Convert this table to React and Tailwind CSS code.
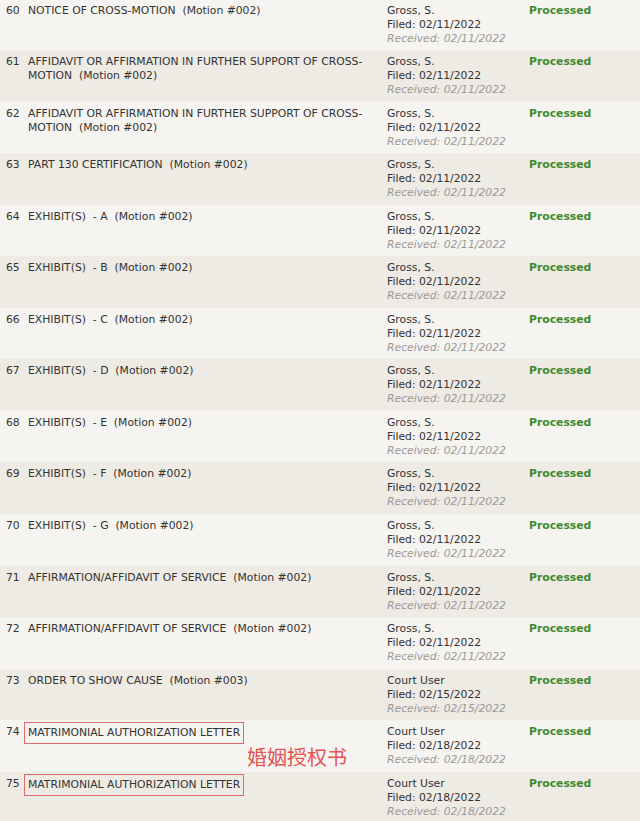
const rows = [
  { n: 60, doc: 'NOTICE OF CROSS-MOTION', motion: '002', by: 'Gross, S.', date: '02/11/2022' },
  { n: 61, doc: 'AFFIDAVIT OR AFFIRMATION IN FURTHER SUPPORT OF CROSS-MOTION', motion: '002', by: 'Gross, S.', date: '02/11/2022' },
  { n: 62, doc: 'AFFIDAVIT OR AFFIRMATION IN FURTHER SUPPORT OF CROSS-MOTION', motion: '002', by: 'Gross, S.', date: '02/11/2022' },
  { n: 63, doc: 'PART 130 CERTIFICATION', motion: '002', by: 'Gross, S.', date: '02/11/2022' },
  { n: 64, doc: 'EXHIBIT(S)\u00a0 - A', motion: '002', by: 'Gross, S.', date: '02/11/2022' },
  { n: 65, doc: 'EXHIBIT(S)\u00a0 - B', motion: '002', by: 'Gross, S.', date: '02/11/2022' },
  { n: 66, doc: 'EXHIBIT(S)\u00a0 - C', motion: '002', by: 'Gross, S.', date: '02/11/2022' },
  { n: 67, doc: 'EXHIBIT(S)\u00a0 - D', motion: '002', by: 'Gross, S.', date: '02/11/2022' },
  { n: 68, doc: 'EXHIBIT(S)\u00a0 - E', motion: '002', by: 'Gross, S.', date: '02/11/2022' },
  { n: 69, doc: 'EXHIBIT(S)\u00a0 - F', motion: '002', by: 'Gross, S.', date: '02/11/2022' },
  { n: 70, doc: 'EXHIBIT(S)\u00a0 - G', motion: '002', by: 'Gross, S.', date: '02/11/2022' },
  { n: 71, doc: 'AFFIRMATION/AFFIDAVIT OF SERVICE', motion: '002', by: 'Gross, S.', date: '02/11/2022' },
  { n: 72, doc: 'AFFIRMATION/AFFIDAVIT OF SERVICE', motion: '002', by: 'Gross, S.', date: '02/11/2022' },
  { n: 73, doc: 'ORDER TO SHOW CAUSE', motion: '003', by: 'Court User', date: '02/15/2022' },
  { n: 74, doc: 'MATRIMONIAL AUTHORIZATION LETTER', boxed: true, note: '婚姻授权书', by: 'Court User', date: '02/18/2022' },
  { n: 75, doc: 'MATRIMONIAL AUTHORIZATION LETTER', boxed: true, by: 'Court User', date: '02/18/2022' },
];

const App = () => {
  return (
    <div
      className="w-[640px] h-[821px] overflow-hidden bg-[#f6f4f0] text-[10.8px] leading-[14px] text-[#333]"
      style={{ fontFamily: '"DejaVu Sans", Verdana, sans-serif' }}
    >
      <div className="-mt-[1.5px]">
        {rows.map((r, i) => (
          <div
            key={r.n}
            className={`flex h-[51.55px] pt-[5px] ${i % 2 === 0 ? 'bg-[#f6f4f0]' : 'bg-[#eeeae4]'}`}
          >
            <div className="w-[28px] shrink-0 pl-[6px]">{r.n}</div>
            <div className="w-[359px] shrink-0 pr-[10px] relative">
              {r.boxed ? (
                <span className="inline-block -ml-[4px] -mt-[3px] border border-[#e06a6a] px-[3px] py-[3px]">
                  {r.doc}
                </span>
              ) : (
                <p>{`${r.doc}\u00a0 (Motion #${r.motion})`}</p>
              )}
              {r.note && (
                <div
                  className="absolute left-[219px] top-[20px] text-[20px] leading-[24px] text-[#e25555]"
                  style={{ fontFamily: '"Noto Sans CJK SC", sans-serif' }}
                >
                  {r.note}
                </div>
              )}
            </div>
            <div className="w-[142px] shrink-0">
              <div>{r.by}</div>
              <div>Filed: {r.date}</div>
              <div className="italic text-[#9a9a9a]">Received: {r.date}</div>
            </div>
            <div className="font-bold text-[#3d8b2f]">Processed</div>
          </div>
        ))}
      </div>
    </div>
  );
};

export default App;
